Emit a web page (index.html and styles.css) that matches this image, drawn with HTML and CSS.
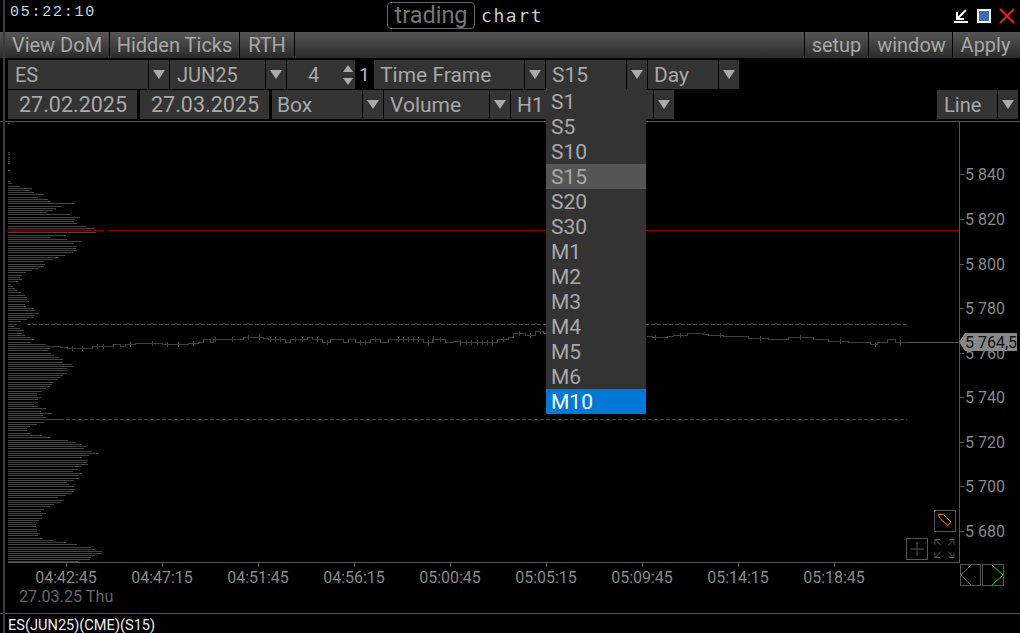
FILE: index.html
```html
<!DOCTYPE html>
<html lang="en">
<head>
<meta charset="utf-8">
<title>trading chart</title>
<link rel="stylesheet" href="styles.css">
</head>
<body>
<div class="app">
  <header class="titlebar">
    <div class="clock">05:22:10</div>
    <div class="title"><span class="title-box">trading</span><span class="title-text">chart</span></div>
    <div class="win">
      <svg class="win-icon" viewBox="0 0 14 14"><path d="M12 1 3 10M3 3v7h7" class="w-stroke"/><path d="M0 13h14" class="w-stroke"/></svg>
      <svg class="win-icon" viewBox="0 0 14 14"><rect width="14" height="14" class="w-white"/><rect x="2" y="2" width="10" height="10" class="w-blue"/></svg>
      <svg class="win-icon" viewBox="0 0 14 14"><path d="M0 0l14 14M14 0 0 14" class="w-red"/></svg>
    </div>
  </header>

  <nav class="toolbar">
    <button class="tb b-dom">View DoM</button>
    <button class="tb b-ticks">Hidden Ticks</button>
    <button class="tb b-rth">RTH</button>
    <span class="tb-fill"></span>
    <button class="tb b-setup">setup</button>
    <button class="tb b-window">window</button>
    <button class="tb b-apply">Apply</button>
  </nav>

  <div class="row row-a">
    <div class="f w-es">ES</div><div class="arrow"></div>
    <div class="f w-jun">JUN25</div><div class="arrow"></div>
    <div class="f w-num"><span class="num">4</span><span class="spin"><i class="up"></i><i class="down"></i></span></div>
    <div class="one">1</div>
    <div class="f w-tf">Time Frame</div><div class="arrow"></div>
    <div class="f w-s15">S15</div><div class="arrow"></div>
    <div class="f w-day">Day</div><div class="arrow"></div>
  </div>

  <div class="row row-b">
    <div class="f w-date">27.02.2025</div>
    <div class="f w-date">27.03.2025</div>
    <div class="f w-box">Box</div><div class="arrow"></div>
    <div class="f w-vol">Volume</div><div class="arrow"></div>
    <div class="f w-h1">H1</div><div class="arrow"></div>
    <span class="tb-fill"></span>
    <div class="f w-line">Line</div><div class="arrow"></div>
  </div>

  <ul class="menu">
    <li>S1</li><li>S5</li><li>S10</li><li class="hover">S15</li><li>S20</li><li>S30</li><li>M1</li><li>M2</li><li>M3</li><li>M4</li><li>M5</li><li>M6</li><li class="sel">M10</li>
  </ul>

  <svg class="chart" width="1020" height="492" viewBox="0 121 1020 492">
    <path class="bars" d="M8 123.5h2M8 152.5h2M8 154.5h2M8 157.5h2M8 159.5h2M8 161.5h2M8 163.5h2M8 170.5h2M8 181.5h3M8 183.5h4M8 186.5h12M8 188.5h24M8 190.5h22M8 192.5h26M8 194.5h36M8 197.5h30M8 199.5h40M8 201.5h43M8 203.5h67M8 206.5h54M8 208.5h48M8 210.5h45M8 212.5h39M8 214.5h63M8 217.5h72M8 219.5h67M8 221.5h66M8 223.5h69M8 226.5h79M8 228.5h87M8 232.5h88M8 235.5h58M8 237.5h43M8 239.5h59M8 241.5h73M8 243.5h66M8 246.5h69M8 248.5h68M8 250.5h69M8 252.5h65M8 255.5h57M8 257.5h51M8 259.5h45M8 261.5h36M8 264.5h37M8 266.5h36M8 268.5h31M8 270.5h24M8 272.5h18M8 275.5h14M8 277.5h12M8 279.5h14M8 281.5h10M8 284.5h3M8 286.5h5M8 288.5h7M8 290.5h9M8 292.5h13M8 295.5h17M8 297.5h19M8 299.5h19M8 301.5h21M8 304.5h17M8 306.5h18M8 308.5h26M8 310.5h27M8 313.5h31M8 315.5h27M8 317.5h26M8 319.5h19M8 321.5h13M8 324.5h9M8 326.5h7M8 328.5h12M8 330.5h16M8 333.5h14M8 335.5h17M8 337.5h23M8 339.5h26M8 342.5h22M8 344.5h38M8 346.5h42M8 348.5h42M8 350.5h40M8 353.5h43M8 355.5h46M8 357.5h51M8 359.5h55M8 362.5h55M8 364.5h64M8 366.5h65M8 368.5h59M8 370.5h60M8 373.5h59M8 375.5h55M8 377.5h53M8 379.5h50M8 382.5h46M8 384.5h44M8 386.5h42M8 388.5h38M8 391.5h34M8 393.5h29M8 395.5h29M8 397.5h33M8 399.5h30M8 402.5h30M8 404.5h26M8 406.5h30M8 408.5h38M8 411.5h33M8 413.5h44M8 415.5h35M8 417.5h38M8 419.5h52M8 422.5h36M8 424.5h29M8 426.5h22M8 428.5h19M8 430.5h19M8 433.5h23M8 435.5h34M8 437.5h42M8 440.5h60M8 442.5h68M8 444.5h74M8 446.5h79M8 448.5h76M8 451.5h84M8 453.5h91M8 455.5h81M8 457.5h74M8 460.5h80M8 462.5h79M8 464.5h80M8 466.5h73M8 469.5h70M8 471.5h65M8 473.5h74M8 475.5h71M8 478.5h71M8 480.5h66M8 482.5h59M8 484.5h61M8 486.5h66M8 489.5h67M8 491.5h66M8 493.5h64M8 495.5h58M8 497.5h50M8 500.5h56M8 502.5h53M8 504.5h46M8 506.5h42M8 509.5h36M8 511.5h33M8 513.5h38M8 515.5h34M8 518.5h34M8 520.5h31M8 522.5h27M8 524.5h28M8 526.5h28M8 529.5h29M8 531.5h29M8 533.5h32M8 535.5h30M8 538.5h35M8 540.5h46M8 542.5h58M8 544.5h69M8 547.5h83M8 549.5h87M8 551.5h94M8 553.5h94M8 555.5h87M8 557.5h83M8 559.5h82M8 561.5h71"/>
    <path class="level" d="M8 230.5h96M108 230.5h851"/>
    <path class="dash" d="M27 324.5h880M60 419.5h847"/>
    <path class="price" d="M8.500 346.500H60.500V347.500H67.500V348.500H92.500V346.500H113.500V344.500H120.500V346.500H125.500V344.500H135.500V343.500H162.500V344.500H188.500V343.500H198.500V342.500H203.500V339.500H210.500V342.500H213.500V339.500H243.500V337.500H263.500V338.500H268.500V339.500H285.500V342.500H290.500V339.500H307.500V337.500H312.500V339.500H322.500V342.500H330.500V339.500H343.500V342.500H348.500V339.500H355.500V342.500H370.500V339.500H380.500V342.500H388.500V339.500H423.500V342.500H432.500V339.500H445.500V342.500H453.500V341.500H460.500V342.500H497.500V339.500H508.500V337.500H513.500V333.500H525.500V335.500H535.500V331.500H543.500V333.500H546.500M646.500 336.500H652.500V337.500H667.500V336.500H673.500V335.500H687.500V333.500H703.500V334.500H708.500V335.500H723.500V336.500H748.500V338.500H768.500V339.500H788.500V337.500H813.500V339.500H828.500V341.500H848.500V342.500H870.500V344.500H877.500V342.500H887.500V339.500H895.500V342.500H906"/>
    <path class="price" d="M72.500 346v5M82.500 346v5M97.500 344v5M103.500 344v5M130.500 342v5M152.500 341v5M167.500 342v5M178.500 342v5M193.500 341v5M215.500 337v5M232.500 337v5M248.500 335v5M259.500 335v5M270.500 337v5M275.500 337v5M280.500 337v5M295.500 337v5M302.500 337v5M317.500 337v5M327.500 340v5M360.500 340v5M365.500 340v5M375.500 337v5M398.500 337v5M403.500 337v5M408.500 337v5M413.500 337v5M418.500 337v5M428.500 340v5M433.500 336v7M440.500 337v5M460.500 340v5M466.500 340v5M471.500 340v5M477.500 340v5M482.500 340v5M487.500 340v5M492.500 340v5M503.500 337v5M519.500 331v5M530.500 333v5M540.500 329v5M655.500 335v5M680.500 333v5M720.500 333v5M760.500 336v5M800.500 335v5M840.500 339v5M875.500 342v5M900.500 340v5"/>
    <path class="tag-line" d="M906 342.5h53"/>
    <path class="axis" d="M0 121.500H1020M959.5 122V562.5H8M960 174.5h4M960 219.5h4M960 264.5h4M960 308.5h4M960 353.5h4M960 397.5h4M960 442.5h4M960 486.5h4M960 531.5h4M66.5 563v4M162.5 563v4M258.5 563v4M354.5 563v4M450.5 563v4M546.5 563v4M642.5 563v4M738.5 563v4M834.5 563v4"/>

    <g class="ylabels">
      <text x="965" y="179.5">5 840</text><text x="965" y="224.5">5 820</text><text x="965" y="269.5">5 800</text><text x="965" y="313.5">5 780</text><text x="965" y="358.5">5 760</text><text x="965" y="402.5">5 740</text><text x="965" y="447.5">5 720</text><text x="965" y="491.5">5 700</text><text x="965" y="536.5">5 680</text>
    </g>
    <polygon class="tag" points="959,342 965,333 1017,333 1017,351 965,351"/>
    <text class="tag-text" x="965" y="347.5">5 764,5</text>

    <g class="xlabels">
      <text x="66" y="583">04:42:45</text><text x="162" y="583">04:47:15</text><text x="258" y="583">04:51:45</text><text x="354" y="583">04:56:15</text><text x="450" y="583">05:00:45</text><text x="546" y="583">05:05:15</text><text x="642" y="583">05:09:45</text><text x="738" y="583">05:14:15</text><text x="834" y="583">05:18:45</text>
    </g>
    <text class="date-label" x="19" y="602">27.03.25 Thu</text>

    <rect class="box" x="934.5" y="510.5" width="21" height="21"/>
    <path class="orange" d="M938.5 514.5h5l7.500 7.500-3.500 3.500-8-7.500z"/>
    <rect class="box" x="906.500" y="538.500" width="21" height="21"/>
    <path class="box-line" d="M917 542v14M910 549h14"/>
    <path class="box-line" d="M935 539.500h5M935 539.500v5M935 539.500l6 6M954 539.500h-5M954 539.500v5M954 539.500l-6 6M935 557.500h5M935 557.500v-5M935 557.500l6-6M954 557.500h-5M954 557.500v-5M954 557.500l-6-6"/>
    <rect class="box" x="960.500" y="564.500" width="20" height="21"/>
    <rect class="box" x="982.500" y="564.500" width="21" height="21"/>
    <path class="box-line" d="M971 565l-10 10 10 10"/>
    <path class="green" d="M992 565l11 10-11 10"/>
    <path class="corner" d="M1006 633 1020 619v14z"/>
  </svg>

  <footer class="status">ES(JUN25)(CME)(S15)</footer>
</div>
</body>
</html>
```
FILE: styles.css
```css
* { box-sizing: border-box; }
html, body { margin: 0; padding: 0; background: #000; }
.app {
  position: relative;
  width: 1020px;
  height: 633px;
  overflow: hidden;
  background: #000;
  font-family: Roboto, "Liberation Sans", sans-serif;
  font-size: 20px;
  color: #a8a8a8;
  display: flex;
  flex-direction: column;
}
.app::before {
  content: "";
  position: absolute;
  left: 3px;
  top: 0;
  width: 2px;
  height: 633px;
  background: #3a3a3a;
}

/* title bar */
.titlebar { position: relative; height: 32px; flex: none; }
.clock {
  position: absolute;
  left: 10px;
  top: 4px;
  font: 15px/18px "Liberation Mono", monospace;
  letter-spacing: 1.75px;
  color: #c8d8e8;
}
.title {
  position: absolute;
  left: 387px;
  top: 2px;
  display: flex;
  align-items: center;
  gap: 6px;
}
.title-box {
  width: 88px;
  height: 27px;
  border: 1px solid #666;
  border-radius: 4px;
  color: #777;
  font-size: 23.5px;
  line-height: 25px;
  text-align: center;
}
.title-text {
  font: 18px/26px "DejaVu Sans Mono", monospace;
  letter-spacing: 1.6px;
  color: #ccc;
}
.win { position: absolute; left: 954px; top: 9px; display: flex; gap: 9px; }
.win-icon { width: 14px; height: 14px; display: block; overflow: visible; }
.w-stroke { fill: none; stroke: #fff; stroke-width: 2; }
.w-white { fill: #fff; }
.w-blue { fill: #3a6db5; }
.w-red { fill: none; stroke: #ee1c25; stroke-width: 2; }

/* toolbar */
.toolbar { height: 26px; flex: none; display: flex; margin-bottom: 2px; background: linear-gradient(#565656, #2b2b2b); }
.tb {
  height: 26px;
  padding: 0;
  border: 0;
  border-right: 1px solid #000;
  background: linear-gradient(#565656, #2b2b2b);
  font: inherit;
  color: inherit;
  text-align: center;
}
.tb-fill { flex: 1; }
.b-dom { width: 110px; padding-left: 5px; }
.b-ticks { width: 130px; }
.b-rth { width: 55px; }
.b-setup { width: 65px; border-left: 1px solid #000; }
.b-window { width: 84px; padding-left: 2px; }
.b-apply { width: 67px; border-right: 0; padding-right: 2px; }

/* form rows */
.row { height: 29px; flex: none; display: flex; padding-left: 8px; margin-bottom: 1px; gap: 1px; }
.f {
  height: 29px;
  background: #333;
  line-height: 30px;
  padding-left: 6px;
  white-space: nowrap;
}
.arrow { position: relative; width: 20px; height: 29px; background: #333; flex: none; }
.arrow::after {
  content: "";
  position: absolute;
  left: 4px;
  top: 10px;
  width: 12px;
  height: 9px;
  background: #aaa;
  clip-path: polygon(0 0, 100% 0, 50% 100%);
}
.w-es { width: 140px; padding-left: 7px; }
.w-jun { width: 95px; padding-left: 7px; }
.w-num { width: 68px; display: flex; padding: 0; }
.num { width: 53px; text-align: center; }
.spin { position: relative; width: 15px; }
.spin i { position: absolute; left: 3px; width: 10px; height: 7px; background: #aaa; }
.up { top: 5px; clip-path: polygon(50% 0, 100% 100%, 0 100%); }
.down { top: 18px; clip-path: polygon(0 0, 100% 0, 50% 100%); }
.one { width: 17px; padding-left: 3px; line-height: 30px; font-size: 19px; color: #bbb; }
.w-tf { width: 150px; font-size: 21px; }
.w-s15 { width: 80px; font-size: 21px; }
.w-day { width: 70px; font-size: 21px; }
.row-b { gap: 0; margin-bottom: 2px; }
.row-b .f, .row-b .arrow { margin-right: 1px; }
.w-date { width: 129px; margin-right: 3px !important; padding-left: 11px; font-size: 21.5px; }
.w-box { width: 90px; padding-left: 5px; font-size: 21px; }
.w-vol { width: 105px; font-size: 21px; }
.w-h1 { width: 142px; font-size: 21px; }
.w-line { width: 60px; padding-left: 7px; }
.row-b .arrow:last-child { margin-right: 2px; }

/* open dropdown */
.menu {
  position: absolute;
  left: 546px;
  top: 89px;
  width: 100px;
  margin: 0;
  padding: 0;
  list-style: none;
  background: #333;
  font-size: 21px;
  z-index: 2;
}
.menu li { height: 25px; line-height: 26px; padding-left: 5px; }
.menu .hover { background: #555; }
.menu .sel { background: #0078d7; color: #fff; }

/* chart */
.chart { display: block; flex: none; }
.bars { fill: none; stroke: #444; stroke-width: 1; shape-rendering: crispEdges; }
.level { fill: none; stroke: #900000; stroke-width: 1; shape-rendering: crispEdges; }
.dash { fill: none; stroke: #444; stroke-width: 1; stroke-dasharray: 4 2; shape-rendering: crispEdges; }
.price { fill: none; stroke: #3e3e3e; stroke-width: 1; shape-rendering: crispEdges; }
.tag-line { fill: none; stroke: #555; stroke-width: 1; shape-rendering: crispEdges; }
.axis { fill: none; stroke: #555; stroke-width: 1; shape-rendering: crispEdges; }
.ylabels text { font-family: Roboto, sans-serif; font-size: 16px; fill: #888; }
.xlabels text { font-family: Roboto, sans-serif; font-size: 16px; fill: #888; text-anchor: middle; }
.date-label { font-family: Roboto, sans-serif; font-size: 16.200px; fill: #666; }
.tag { fill: #888; }
.tag-text { font-family: Roboto, sans-serif; font-size: 16px; fill: #111; }
.box { fill: none; stroke: #555; stroke-width: 1; shape-rendering: crispEdges; }
.box-line { fill: none; stroke: #555; stroke-width: 1; }
.orange { fill: none; stroke: #f0703a; stroke-width: 1; }
.green { fill: none; stroke: #00e000; stroke-width: 1; }
.corner { fill: #666; }

/* status */
.status {
  height: 20px;
  flex: none;
  border-top: 1px solid #555;
  padding-left: 8px;
  font-size: 14.6px;
  line-height: 23px;
  color: #eee;
}
```
